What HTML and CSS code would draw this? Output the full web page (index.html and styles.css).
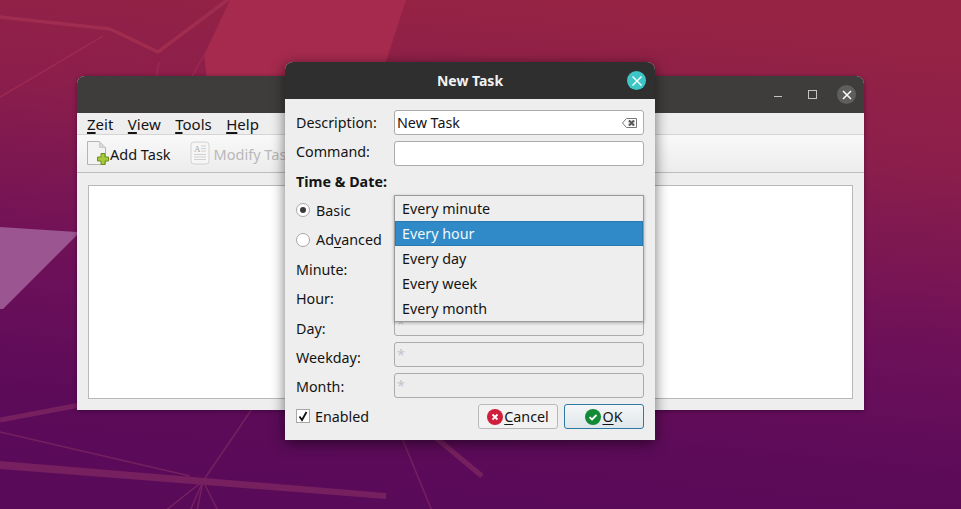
FILE: index.html
```html
<!DOCTYPE html>
<html lang="en">
<head>
<meta charset="utf-8">
<title>Zeit - New Task</title>
<link rel="stylesheet" href="styles.css">
</head>
<body>
<div class="desktop">
  <svg class="wallpaper" width="961" height="509" viewBox="0 0 961 509" aria-hidden="true">
    <defs>
      <linearGradient id="wp" x1="0.6" y1="0" x2="0.42" y2="1">
        <stop offset="0" stop-color="#962344"/>
        <stop offset="0.25" stop-color="#8b1e4b"/>
        <stop offset="0.6" stop-color="#6d1059"/>
        <stop offset="0.85" stop-color="#5c0b59"/>
        <stop offset="1" stop-color="#590a58"/>
      </linearGradient>
    </defs>
    <rect width="961" height="509" fill="url(#wp)"/>
    <polygon points="230,0 406,0 380,80 207,80 204,55" fill="#a52a4e"/>
    <polygon points="0,227 77,232 77,235 3,309 0,309" fill="#9b5590"/>
    <g fill="none" stroke="#a02c50" stroke-width="3.5">
      <polyline points="0,17 110,29 158,52 230,-2"/>
    </g>
    <g fill="none" stroke="#9c2a52" stroke-width="1.5">
      <line x1="0" y1="97" x2="103" y2="36"/>
      <line x1="159" y1="62" x2="156" y2="78"/>
      <line x1="204" y1="55" x2="190" y2="80"/>
    </g>
    <g fill="none" stroke="#76205f">
      <line x1="0" y1="420" x2="80" y2="405" stroke-width="5"/>
      <line x1="0" y1="432" x2="190" y2="476" stroke-width="1.5"/>
      <line x1="252" y1="409" x2="203" y2="481" stroke-width="1.5"/>
      <line x1="203" y1="481" x2="165" y2="511" stroke-width="1.5"/>
      <line x1="203" y1="481" x2="190" y2="511" stroke-width="1.5"/>
      <line x1="203" y1="481" x2="197" y2="511" stroke-width="1.5"/>
      <line x1="203" y1="481" x2="218" y2="511" stroke-width="1.5"/>
      <line x1="402" y1="438" x2="432" y2="511" stroke-width="1.5"/>
      <line x1="436" y1="438" x2="482" y2="476" stroke-width="5"/>
    </g>
    <polygon points="0,461 386,493 386,499 0,469" fill="#76205f"/>
  </svg>

  <section class="window main-window">
    <header class="titlebar main-titlebar">
      <span class="wm-button wm-min"></span>
      <span class="wm-button wm-max"></span>
      <span class="wm-button wm-close">
        <svg width="18" height="18" viewBox="0 0 18 18" aria-hidden="true"><path d="M5 5l8 8M13 5l-8 8" stroke="#fff" stroke-width="1.500" fill="none"/></svg>
      </span>
    </header>
    <nav class="menubar">
      <span><u>Z</u>eit</span>
      <span><u>V</u>iew</span>
      <span><u>T</u>ools</span>
      <span><u>H</u>elp</span>
    </nav>
    <div class="toolbar">
      <span class="tool">
        <svg width="24" height="25" viewBox="0 0 24 25" aria-hidden="true">
          <path d="M1.500 .5h12l6 6v17h-18z" fill="#f3f3f3" stroke="#b4b4b0"/>
          <path d="M13.500 .5v6h6z" fill="#d8d8d4" stroke="#c4c4c0" stroke-width=".7"/>
          <path d="M11.500 16h3.500v-3.500h4v3.500h3.500v4h-3.500v3.500h-4v-3.500h-3.500z" fill="#a6c93a" stroke="#6d8c1e"/>
        </svg>
        <span>Add Task</span>
      </span>
      <span class="tool tool-disabled">
        <svg width="20" height="24" viewBox="0 0 20 24" aria-hidden="true">
          <rect x="1" y="1" width="18" height="22" rx="3" fill="#f6f6f6" stroke="#d2d2d2"/>
          <text x="4" y="11" class="icon-letter">A</text>
          <path d="M11 5h5M11 7.500h5M11 10h5M4 13.500h12M4 16h12M4 18.500h12" stroke="#d0d0d0" fill="none"/>
        </svg>
        <span>Modify Task</span>
      </span>
    </div>
    <div class="main-content"><div class="task-list"></div></div>
  </section>

  <section class="window dialog">
    <header class="titlebar dialog-titlebar">
      <h1>New Task</h1>
      <span class="dialog-close">
        <svg width="18" height="18" viewBox="0 0 18 18" aria-hidden="true"><path d="M4.500 4.500l9 9M13.500 4.500l-9 9" stroke="#fff" stroke-width="1.400" fill="none"/></svg>
      </span>
    </header>
    <div class="dialog-body">
      <div class="labels">
        <div class="label-row">Description:</div>
        <div class="label-row">Command:</div>
        <div class="label-row strong">Time &amp; Date:</div>
        <div class="label-row"><span class="radio radio-on"></span><span>Basic</span></div>
        <div class="label-row"><span class="radio"></span><span>Ad<u>v</u>anced</span></div>
        <div class="label-row">Minute:</div>
        <div class="label-row">Hour:</div>
        <div class="label-row">Day:</div>
        <div class="label-row">Weekday:</div>
        <div class="label-row">Month:</div>
        <div class="label-row">
          <span class="check"><svg width="14" height="14" viewBox="0 0 14 14" aria-hidden="true"><path d="M3.500 7.500l2.500 3.500 4.500-8" stroke="#111" stroke-width="1.800" fill="none"/></svg></span><span>Enabled</span>
        </div>
      </div>
      <div class="fields">
        <div class="field">
          <span>New Task</span>
          <svg class="clear-icon" width="15" height="10" viewBox="0 0 15 10" aria-hidden="true">
            <path d="M4.500 .5h10v9h-10l-4-4.500z" fill="none" stroke="#777"/>
            <path d="M6 2h7v6h-7z" fill="#e5e5e5"/>
            <path d="M7 2.500l5 5M12 2.500l-5 5" stroke="#555" stroke-width="1.800" fill="none"/>
          </svg>
        </div>
        <div class="field"></div>
        <div class="combo-slot"></div>
        <div class="field field-off"></div>
        <div class="field field-off"></div>
        <div class="field field-off">*</div>
        <div class="field field-off">*</div>
        <div class="field field-off">*</div>
        <div class="buttons">
          <span class="button">
            <svg width="16" height="16" viewBox="0 0 16 16" aria-hidden="true"><circle cx="8" cy="8" r="8" fill="#cf1f3c"/><path d="M5.500 5.500l5 5M10.500 5.500l-5 5" stroke="#fff" stroke-width="1.800"/></svg>
            <span><u>C</u>ancel</span>
          </span>
          <span class="button button-default">
            <svg width="16" height="16" viewBox="0 0 16 16" aria-hidden="true"><circle cx="8" cy="8" r="8" fill="#138a36"/><path d="M4.500 8.200l2.500 2.300 4.500-4.500" stroke="#fff" stroke-width="1.800" fill="none"/></svg>
            <span><u>O</u>K</span>
          </span>
        </div>
      </div>
      <ul class="popup">
        <li>Every minute</li>
        <li class="selected">Every hour</li>
        <li>Every day</li>
        <li>Every week</li>
        <li>Every month</li>
      </ul>
    </div>
  </section>
</div>
</body>
</html>
```
FILE: styles.css
```css
* { box-sizing: border-box; }
html, body { margin: 0; padding: 0; }
body {
  width: 961px;
  height: 509px;
  overflow: hidden;
  font-family: "Noto Sans", "Open Sans", sans-serif;
  font-size: 14.300px;
  color: #141414;
}
u { text-underline-offset: 2px; text-decoration-thickness: 1px; }

.desktop { position: relative; width: 961px; height: 509px; overflow: hidden; }
.wallpaper { position: absolute; left: 0; top: 0; display: block; }

.window { position: absolute; background: #eeeeee; }
.titlebar { display: flex; align-items: center; border-radius: 8px 8px 0 0; }

.main-window {
  left: 77px;
  top: 76px;
  width: 787px;
  height: 334px;
  border-radius: 8px 8px 0 0;
  box-shadow: 0 1px 4px rgba(40, 0, 40, .55);
}
.main-titlebar { height: 37px; background: #3e3d3b; justify-content: flex-end; padding-right: 5px; }
.wm-button { display: block; flex: none; }
.wm-min { width: 8px; height: 1px; background: #c4c4c2; margin: 3px 26px 0 0; }
.wm-max { width: 9px; height: 9px; border: 1px solid #c4c4c2; margin: 0 20px 0 0; }
.wm-close {
  width: 19px; height: 19px; border-radius: 50%; background: #5e5e5c;
  display: flex; align-items: center; justify-content: center; margin-right: 3px;
}
.menubar {
  height: 22px;
  display: flex;
  align-items: center;
  gap: 14.500px;
  padding-left: 10px;
  background: #eeeeee;
  font-size: 15px;
  border-bottom: 1px solid #d4d4d4;
}
.menubar u { text-decoration-thickness: 2px; text-underline-offset: 2px; }
.toolbar {
  height: 38px;
  display: flex;
  align-items: center;
  gap: 19px;
  padding-left: 9px;
  background: linear-gradient(#f9f9f9, #ececec);
  border-bottom: 1px solid #bcbcbc;
}
.tool { display: flex; align-items: center; font-size: 14.500px; padding-top: 1px; }
.tool svg { display: block; margin-top: -2px; }
.tool-disabled { color: #b8b8b8; }
.tool-disabled svg { margin-right: 4px; }
.icon-letter { font-size: 9px; fill: #a8a8a8; font-family: "Liberation Serif", serif; }
.main-content { padding: 12px 11px 11px; height: 237px; }
.task-list { height: 214px; background: #fff; border: 1px solid #b8b8b8; }

.dialog {
  left: 285px;
  top: 62px;
  width: 370px;
  height: 378px;
  border-radius: 8px 8px 0 0;
  box-shadow: 0 3px 14px rgba(0, 0, 0, .55);
}
.dialog-titlebar { height: 37px; background: #302f2f; position: relative; justify-content: center; }
.dialog-titlebar h1 { margin: 0; font-size: 14px; font-weight: 700; color: #f2f2f2; }
.dialog-close {
  position: absolute; right: 9px; top: 9px;
  width: 19px; height: 19px; border-radius: 50%; background: #3ec6c6;
  display: flex; align-items: center; justify-content: center;
}

.dialog-body { position: relative; display: flex; height: 341px; padding: 0 11px; }
.labels { width: 98px; flex: none; padding-top: 8.600px; }
.label-row { height: 29.400px; display: flex; align-items: center; }
.strong { font-weight: 700; }
.radio {
  width: 14px; height: 14px; border-radius: 50%; flex: none;
  background: #fff; border: 1px solid #a8a8a8; margin-right: 6px;
  display: flex; align-items: center; justify-content: center;
}
.radio-on::after { content: ""; width: 6px; height: 6px; border-radius: 50%; background: #3a3a3a; }
.check {
  width: 14px; height: 14px; flex: none; background: #fff; border: 1px solid #a8a8a8;
  margin-right: 5px; display: flex; align-items: center; justify-content: center;
}
.check svg { flex: none; }

.fields { width: 250px; flex: none; padding-top: 11px; }
.field {
  height: 25px; margin-bottom: 6px;
  border: 1px solid #ababab; border-radius: 3px; background: #fff;
  display: flex; align-items: center; justify-content: space-between;
  padding: 0 6px 0 2px;
}
.clear-icon { flex: none; }
.combo-slot { height: 71px; margin-bottom: 6px; }
.field-off { background: #ededed; color: #c4c4c4; align-items: flex-start; line-height: 19px; padding-top: 2px; }
.buttons { display: flex; justify-content: flex-end; gap: 6px; }
.button {
  width: 80px; height: 25px; display: flex; align-items: center; justify-content: center; gap: 1px;
  border: 1px solid #b9b9b9; border-radius: 3px; background: #f2f2f2;
}
.button-default { border-color: #2e79a6; background: linear-gradient(#f4f6f7, #dfe6ea); }

.popup {
  position: absolute;
  left: 109px;
  top: 96px;
  width: 250px;
  height: 127px;
  margin: 0;
  padding: 0;
  list-style: none;
  background: #eeeeee;
  border: 1px solid #9a9a9a;
  box-shadow: 0 1px 3px rgba(0, 0, 0, .3);
}
.popup li { height: 25px; display: flex; align-items: center; padding-left: 7px; }
.popup .selected { background: #2f8ac7; color: #f2f8fc; box-shadow: inset 0 0 0 1px #2a7aaf; }
```
